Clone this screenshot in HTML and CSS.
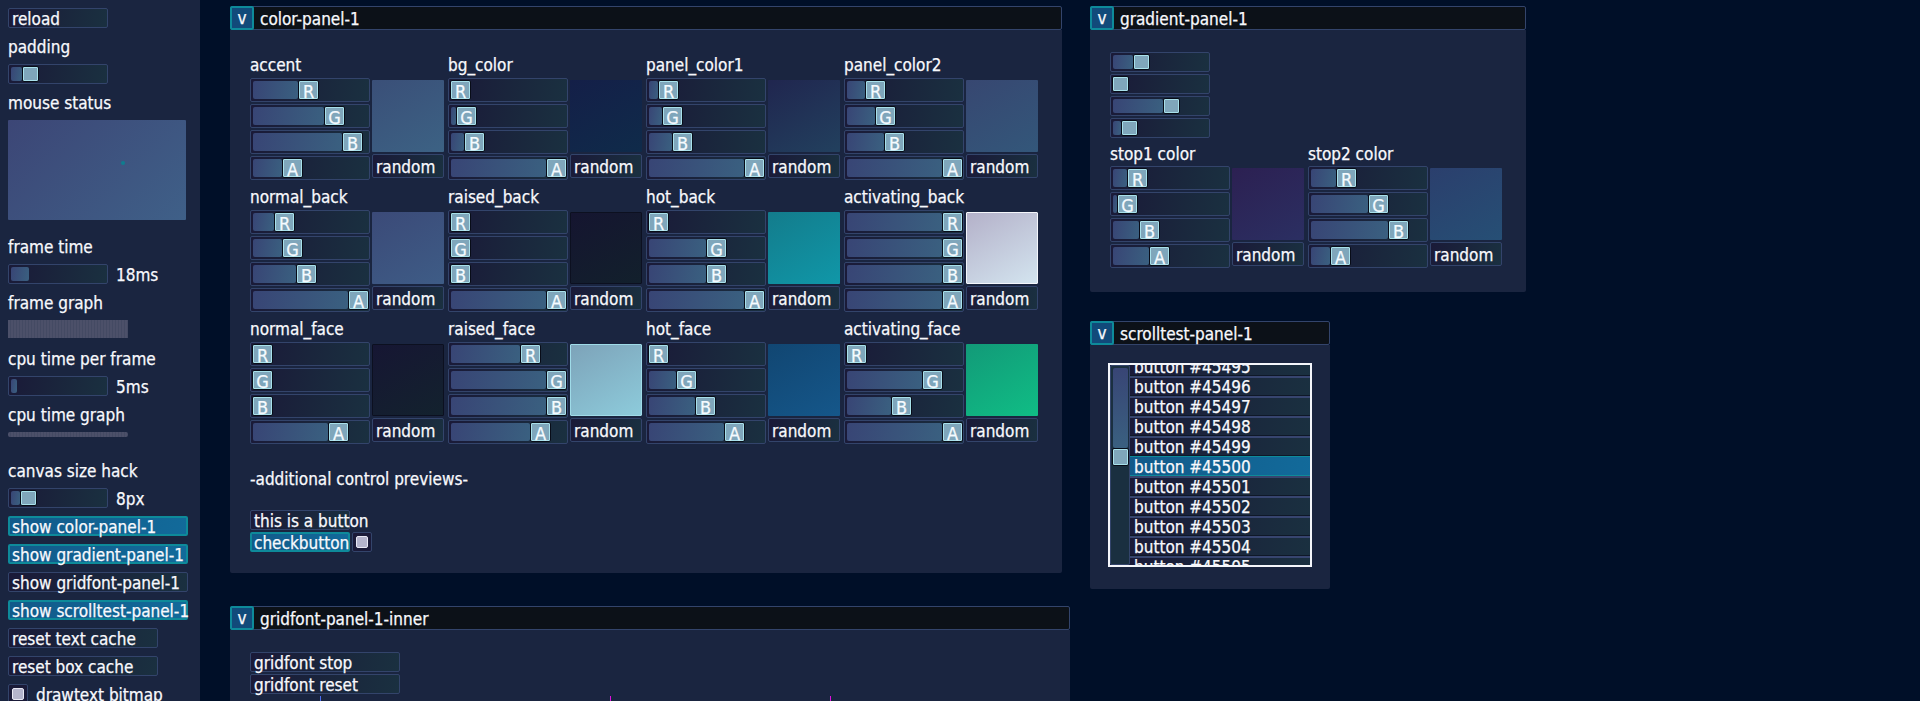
FILE: index.html
```html
<!DOCTYPE html>
<html>
<head>
    <title>gui demo</title>
    <meta charset="UTF-8">
    <link rel="stylesheet" href="styles.css">
</head>

<body>

<div class="sidebar">
    <div class="btn short">reload</div>
    <div class="label">padding</div>
    <div class="slider small short"><div class="fill" style="width:11px"></div><div class="thumb"></div></div>
    <div class="label">mouse status</div>
    <div class="mouse-box"><div class="mouse-dot"></div></div>
    <div class="label after-box">frame time</div>
    <div class="value-row">
        <div class="slider small short"><div class="fill" style="width:18px"></div></div>
        <span>18ms</span>
    </div>
    <div class="label">frame graph</div>
    <div class="graph frame-graph"></div>
    <div class="label after-graph">cpu time per frame</div>
    <div class="value-row">
        <div class="slider small short"><div class="fill" style="width:6px"></div></div>
        <span>5ms</span>
    </div>
    <div class="label">cpu time graph</div>
    <div class="graph cpu-graph"></div>
    <div class="label after-cpu">canvas size hack</div>
    <div class="value-row">
        <div class="slider small short"><div class="fill" style="width:9px"></div><div class="thumb"></div></div>
        <span>8px</span>
    </div>
    <div class="btn on wide">show color-panel-1</div>
    <div class="btn on wide">show gradient-panel-1</div>
    <div class="btn wide">show gridfont-panel-1</div>
    <div class="btn on wide">show scrolltest-panel-1</div>
    <div class="btn mid">reset text cache</div>
    <div class="btn mid">reset box cache</div>
    <div class="check-row">
        <div class="check"><div class="check-mark"></div></div>
        <span>drawtext bitmap</span>
    </div>
</div>

<div class="column col-left">
    <div class="panel color-panel">
        <div class="panel-head"><div class="toggle">v</div><span>color-panel-1</span></div>
        <div class="panel-body color-body">
            <div class="picker-grid">

                <div class="picker">
                    <div class="label">accent</div>
                    <div class="picker-main">
                        <div class="sliders">
                            <div class="slider"><div class="fill" style="width:45px"></div><div class="thumb">R</div></div>
                            <div class="slider"><div class="fill" style="width:71px"></div><div class="thumb">G</div></div>
                            <div class="slider"><div class="fill" style="width:89px"></div><div class="thumb">B</div></div>
                            <div class="slider"><div class="fill" style="width:29px"></div><div class="thumb">A</div></div>
                        </div>
                        <div class="picker-side"><div class="swatch sw-accent"></div><div class="btn random">random</div></div>
                    </div>
                </div>

                <div class="picker">
                    <div class="label">bg_color</div>
                    <div class="picker-main">
                        <div class="sliders">
                            <div class="slider"><div class="thumb">R</div></div>
                            <div class="slider"><div class="fill" style="width:5px"></div><div class="thumb">G</div></div>
                            <div class="slider"><div class="fill" style="width:13px"></div><div class="thumb">B</div></div>
                            <div class="slider"><div class="fill" style="width:95px"></div><div class="thumb">A</div></div>
                        </div>
                        <div class="picker-side"><div class="swatch sw-bg"></div><div class="btn random">random</div></div>
                    </div>
                </div>

                <div class="picker">
                    <div class="label">panel_color1</div>
                    <div class="picker-main">
                        <div class="sliders">
                            <div class="slider"><div class="fill" style="width:9px"></div><div class="thumb">R</div></div>
                            <div class="slider"><div class="fill" style="width:13px"></div><div class="thumb">G</div></div>
                            <div class="slider"><div class="fill" style="width:23px"></div><div class="thumb">B</div></div>
                            <div class="slider"><div class="fill" style="width:95px"></div><div class="thumb">A</div></div>
                        </div>
                        <div class="picker-side"><div class="swatch sw-panel1"></div><div class="btn random">random</div></div>
                    </div>
                </div>

                <div class="picker">
                    <div class="label">panel_color2</div>
                    <div class="picker-main">
                        <div class="sliders">
                            <div class="slider"><div class="fill" style="width:18px"></div><div class="thumb">R</div></div>
                            <div class="slider"><div class="fill" style="width:28px"></div><div class="thumb">G</div></div>
                            <div class="slider"><div class="fill" style="width:37px"></div><div class="thumb">B</div></div>
                            <div class="slider"><div class="fill" style="width:95px"></div><div class="thumb">A</div></div>
                        </div>
                        <div class="picker-side"><div class="swatch sw-panel2"></div><div class="btn random">random</div></div>
                    </div>
                </div>

                <div class="picker">
                    <div class="label">normal_back</div>
                    <div class="picker-main">
                        <div class="sliders">
                            <div class="slider"><div class="fill" style="width:21px"></div><div class="thumb">R</div></div>
                            <div class="slider"><div class="fill" style="width:29px"></div><div class="thumb">G</div></div>
                            <div class="slider"><div class="fill" style="width:43px"></div><div class="thumb">B</div></div>
                            <div class="slider"><div class="fill" style="width:95px"></div><div class="thumb">A</div></div>
                        </div>
                        <div class="picker-side"><div class="swatch sw-normal-back"></div><div class="btn random">random</div></div>
                    </div>
                </div>

                <div class="picker">
                    <div class="label">raised_back</div>
                    <div class="picker-main">
                        <div class="sliders">
                            <div class="slider"><div class="thumb">R</div></div>
                            <div class="slider"><div class="thumb">G</div></div>
                            <div class="slider"><div class="thumb">B</div></div>
                            <div class="slider"><div class="fill" style="width:95px"></div><div class="thumb">A</div></div>
                        </div>
                        <div class="picker-side"><div class="swatch sw-raised-back"></div><div class="btn random">random</div></div>
                    </div>
                </div>

                <div class="picker">
                    <div class="label">hot_back</div>
                    <div class="picker-main">
                        <div class="sliders">
                            <div class="slider"><div class="thumb">R</div></div>
                            <div class="slider"><div class="fill" style="width:57px"></div><div class="thumb">G</div></div>
                            <div class="slider"><div class="fill" style="width:57px"></div><div class="thumb">B</div></div>
                            <div class="slider"><div class="fill" style="width:95px"></div><div class="thumb">A</div></div>
                        </div>
                        <div class="picker-side"><div class="swatch sw-hot-back"></div><div class="btn random">random</div></div>
                    </div>
                </div>

                <div class="picker">
                    <div class="label">activating_back</div>
                    <div class="picker-main">
                        <div class="sliders">
                            <div class="slider"><div class="fill" style="width:95px"></div><div class="thumb">R</div></div>
                            <div class="slider"><div class="fill" style="width:95px"></div><div class="thumb">G</div></div>
                            <div class="slider"><div class="fill" style="width:95px"></div><div class="thumb">B</div></div>
                            <div class="slider"><div class="fill" style="width:95px"></div><div class="thumb">A</div></div>
                        </div>
                        <div class="picker-side"><div class="swatch sw-activating-back"></div><div class="btn random">random</div></div>
                    </div>
                </div>

                <div class="picker">
                    <div class="label">normal_face</div>
                    <div class="picker-main">
                        <div class="sliders">
                            <div class="slider"><div class="thumb">R</div></div>
                            <div class="slider"><div class="thumb">G</div></div>
                            <div class="slider"><div class="thumb">B</div></div>
                            <div class="slider"><div class="fill" style="width:75px"></div><div class="thumb">A</div></div>
                        </div>
                        <div class="picker-side"><div class="swatch sw-normal-face"></div><div class="btn random">random</div></div>
                    </div>
                </div>

                <div class="picker">
                    <div class="label">raised_face</div>
                    <div class="picker-main">
                        <div class="sliders">
                            <div class="slider"><div class="fill" style="width:69px"></div><div class="thumb">R</div></div>
                            <div class="slider"><div class="fill" style="width:95px"></div><div class="thumb">G</div></div>
                            <div class="slider"><div class="fill" style="width:95px"></div><div class="thumb">B</div></div>
                            <div class="slider"><div class="fill" style="width:79px"></div><div class="thumb">A</div></div>
                        </div>
                        <div class="picker-side"><div class="swatch sw-raised-face"></div><div class="btn random">random</div></div>
                    </div>
                </div>

                <div class="picker">
                    <div class="label">hot_face</div>
                    <div class="picker-main">
                        <div class="sliders">
                            <div class="slider"><div class="thumb">R</div></div>
                            <div class="slider"><div class="fill" style="width:27px"></div><div class="thumb">G</div></div>
                            <div class="slider"><div class="fill" style="width:46px"></div><div class="thumb">B</div></div>
                            <div class="slider"><div class="fill" style="width:75px"></div><div class="thumb">A</div></div>
                        </div>
                        <div class="picker-side"><div class="swatch sw-hot-face"></div><div class="btn random">random</div></div>
                    </div>
                </div>

                <div class="picker">
                    <div class="label">activating_face</div>
                    <div class="picker-main">
                        <div class="sliders">
                            <div class="slider"><div class="thumb">R</div></div>
                            <div class="slider"><div class="fill" style="width:75px"></div><div class="thumb">G</div></div>
                            <div class="slider"><div class="fill" style="width:44px"></div><div class="thumb">B</div></div>
                            <div class="slider"><div class="fill" style="width:95px"></div><div class="thumb">A</div></div>
                        </div>
                        <div class="picker-side"><div class="swatch sw-activating-face"></div><div class="btn random">random</div></div>
                    </div>
                </div>

            </div>

            <div class="label previews-title">-additional control previews-</div>
            <div class="previews">
                <div class="btn preview-btn">this is a button</div>
                <div class="check-row">
                    <div class="btn on preview-btn">checkbutton</div>
                    <div class="check"><div class="check-mark"></div></div>
                </div>
            </div>
        </div>
    </div>

    <div class="panel gridfont-panel">
        <div class="panel-head"><div class="toggle">v</div><span>gridfont-panel-1-inner</span></div>
        <div class="panel-body gridfont-body">
            <div class="btn gridfont-btn">gridfont stop</div>
            <div class="btn gridfont-btn">gridfont reset</div>
            <div class="gridfont-canvas">
                <div class="tick tick-a"></div>
                <div class="tick tick-b"></div>
                <div class="tick tick-c"></div>
            </div>
        </div>
    </div>
</div>

<div class="column col-right">
    <div class="panel gradient-panel">
        <div class="panel-head"><div class="toggle">v</div><span>gradient-panel-1</span></div>
        <div class="panel-body gradient-body">
            <div class="stop-sliders">
                <div class="slider small short"><div class="fill" style="width:20px"></div><div class="thumb"></div></div>
                <div class="slider small short"><div class="thumb"></div></div>
                <div class="slider small short"><div class="fill" style="width:50px"></div><div class="thumb"></div></div>
                <div class="slider small short"><div class="fill" style="width:8px"></div><div class="thumb"></div></div>
            </div>
            <div class="picker-row">
                <div class="picker">
                    <div class="label">stop1 color</div>
                    <div class="picker-main">
                        <div class="sliders">
                            <div class="slider"><div class="fill" style="width:14px"></div><div class="thumb">R</div></div>
                            <div class="slider"><div class="fill" style="width:4px"></div><div class="thumb">G</div></div>
                            <div class="slider"><div class="fill" style="width:26px"></div><div class="thumb">B</div></div>
                            <div class="slider"><div class="fill" style="width:36px"></div><div class="thumb">A</div></div>
                        </div>
                        <div class="picker-side"><div class="swatch sw-stop1"></div><div class="btn random">random</div></div>
                    </div>
                </div>
                <div class="picker">
                    <div class="label">stop2 color</div>
                    <div class="picker-main">
                        <div class="sliders">
                            <div class="slider"><div class="fill" style="width:25px"></div><div class="thumb">R</div></div>
                            <div class="slider"><div class="fill" style="width:57px"></div><div class="thumb">G</div></div>
                            <div class="slider"><div class="fill" style="width:77px"></div><div class="thumb">B</div></div>
                            <div class="slider"><div class="fill" style="width:19px"></div><div class="thumb">A</div></div>
                        </div>
                        <div class="picker-side"><div class="swatch sw-stop2"></div><div class="btn random">random</div></div>
                    </div>
                </div>
            </div>
        </div>
    </div>

    <div class="panel scroll-panel">
        <div class="panel-head"><div class="toggle">v</div><span>scrolltest-panel-1</span></div>
        <div class="panel-body scroll-body">
            <div class="scroll-box">
                <div class="scrollbar">
                    <div class="scroll-fill"></div>
                    <div class="thumb"></div>
                </div>
                <div class="scroll-list">
                    <div class="scroll-item">button #45495</div>
                    <div class="scroll-item">button #45496</div>
                    <div class="scroll-item">button #45497</div>
                    <div class="scroll-item">button #45498</div>
                    <div class="scroll-item">button #45499</div>
                    <div class="scroll-item on">button #45500</div>
                    <div class="scroll-item">button #45501</div>
                    <div class="scroll-item">button #45502</div>
                    <div class="scroll-item">button #45503</div>
                    <div class="scroll-item">button #45504</div>
                    <div class="scroll-item">button #45505</div>
                </div>
            </div>
        </div>
    </div>
</div>

</body>
</html>
```

FILE: styles.css
```css
body {
    margin: 0;
    height: 701px;
    overflow: hidden;
    display: flex;
    background-color: #000f28;
    color: #f8f9fd;
    font-family: "DejaVu Sans", sans-serif;
    font-stretch: condensed;
    font-size: 17px;
    line-height: 20px;
    white-space: nowrap;
    -webkit-text-stroke: 0.25px #f8f9fd;
}

/* sidebar */
.sidebar {
    width: 200px;
    height: 701px;
    box-sizing: border-box;
    padding: 8px;
    flex-shrink: 0;
    display: flex;
    flex-direction: column;
    gap: 8px;
    background-color: #1a2540;
}

.sidebar > * {
    flex-shrink: 0;
}

.label {
    height: 20px;
}

.sidebar .label,
.gradient-body .label,
.value-row span,
.check-row span {
    line-height: 22px;
}

.after-box {
    margin-top: 8px;
}

.after-graph {
    margin-top: 2px;
}

.after-cpu {
    margin-top: 15px;
}

.mouse-box {
    position: relative;
    width: 178px;
    height: 100px;
    background: linear-gradient(135deg, #3c4676, #3f6088);
    border-radius: 1px;
}

.mouse-dot {
    position: absolute;
    left: 113px;
    top: 41px;
    width: 4px;
    height: 4px;
    border-radius: 50%;
    background-color: #0f7d8f;
}

.graph {
    width: 120px;
    background: repeating-linear-gradient(90deg, #4c5069 0, #4c5069 2px, #444a63 2px, #444a63 3px);
}

.frame-graph {
    height: 18px;
}

.cpu-graph {
    height: 5px;
    border-radius: 2px;
}

.value-row,
.check-row {
    display: flex;
    align-items: flex-start;
    gap: 8px;
    height: 20px;
}

/* buttons */
.btn {
    box-sizing: border-box;
    height: 20px;
    flex-shrink: 0;
    padding-left: 3px;
    border: 1px solid #33446b;
    border-radius: 2px;
    background: linear-gradient(100deg, #1a1a38, #1a3040);
    line-height: 21px;
}

.btn.on {
    padding-left: 2px;
    border: 2px solid #0e8a9a;
    background: linear-gradient(100deg, #125a8a, #126a9a);
    line-height: 19px;
}

.btn.short,
.slider.short {
    width: 100px;
}

.btn.wide {
    width: 180px;
}

.btn.mid {
    width: 150px;
}

.check {
    box-sizing: border-box;
    width: 20px;
    height: 20px;
    padding: 3px;
    border: 1px solid #33446b;
    border-radius: 2px;
    background-color: #1a1a38;
}

.check-mark {
    box-sizing: border-box;
    width: 12px;
    height: 12px;
    border: 1px solid #e8e8f4;
    border-radius: 2px;
    background-color: #b4b4cc;
}

/* sliders */
.slider {
    box-sizing: border-box;
    width: 120px;
    height: 24px;
    padding: 1px 0 1px 2px;
    display: flex;
    align-items: center;
    flex-shrink: 0;
    border: 1px solid #33446b;
    border-radius: 2px;
    background: linear-gradient(100deg, #1a1a38, #1a3040);
}

.slider.small {
    height: 20px;
}

.fill {
    height: 18px;
    flex-shrink: 0;
    border-radius: 2px;
    background: linear-gradient(100deg, #384575, #3a6080);
}

.slider.small .fill {
    height: 14px;
}

.thumb {
    box-sizing: border-box;
    width: 21px;
    height: 20px;
    flex-shrink: 0;
    border: 1px solid #080c18;
    border-radius: 2px;
    background-color: #7fa6bb;
    box-shadow: inset 0 0 0 1px #a8e0ea;
    text-align: center;
    font-size: 18px;
    line-height: 21px;
    color: #f4fbff;
}

.thumb:first-child {
    margin-left: -1px;
}

.slider.small .thumb {
    width: 17px;
    height: 16px;
}

/* panels */
.column {
    display: flex;
    flex-direction: column;
    padding-top: 6px;
    flex-shrink: 0;
}

.col-left {
    width: 840px;
    margin-left: 30px;
    gap: 33px;
}

.col-right {
    margin-left: 20px;
    gap: 29px;
}

.panel-head {
    box-sizing: border-box;
    height: 24px;
    display: flex;
    align-items: center;
    gap: 6px;
    border: 1px solid #33446b;
    border-radius: 2px;
    background-color: #0c1118;
}

.panel-head span {
    margin-top: 2px;
}

.toggle {
    box-sizing: border-box;
    width: 24px;
    height: 24px;
    margin: -1px 0 -1px -1px;
    border: 2px solid #0e8a9a;
    border-radius: 2px;
    background-color: #114a7a;
    text-align: center;
    line-height: 20px;
}

.panel-body {
    background-color: #1a2540;
    border-radius: 0 0 2px 2px;
    padding-left: 20px;
}

.color-panel {
    width: 832px;
}

.color-body {
    padding-top: 25px;
    padding-bottom: 21px;
}

.picker-grid {
    display: grid;
    grid-template-columns: repeat(4, 194px);
    column-gap: 4px;
    row-gap: 7px;
}

.picker {
    width: 194px;
}

.picker-main {
    display: flex;
    gap: 2px;
    margin-top: 3px;
}

.sliders {
    display: flex;
    flex-direction: column;
    gap: 2px;
}

.picker-side {
    display: flex;
    flex-direction: column;
    gap: 2px;
    padding-top: 2px;
}

.swatch {
    box-sizing: border-box;
    width: 72px;
    height: 72px;
    border-radius: 1px;
}

.btn.random {
    width: 72px;
    height: 24px;
    line-height: 25px;
}

.sw-accent { background: linear-gradient(150deg, #3a4f78, #3c6284); }
.sw-bg { background: linear-gradient(150deg, #141f48, #0f2b4a); }
.sw-panel1 { background: linear-gradient(150deg, #20264f, #22405e); }
.sw-panel2 { background: linear-gradient(150deg, #374771, #33577a); }
.sw-normal-back { background: linear-gradient(150deg, #3b4a78, #3e5c86); }
.sw-raised-back { background: linear-gradient(150deg, #151530, #12202c); border: 1px solid #0c1020; }
.sw-hot-back { background: linear-gradient(150deg, #137c8c, #1097a8); }
.sw-activating-back { background: linear-gradient(150deg, #b4b1c9, #d3e4ef); border: 1px solid #f4f6fb; }
.sw-normal-face { background: linear-gradient(150deg, #161633, #13222e); border: 1px solid #0c1020; }
.sw-raised-face { background: linear-gradient(150deg, #7da3b9, #8dcbdb); border: 1px solid #9fdbe8; }
.sw-hot-face { background: linear-gradient(150deg, #114672, #15578a); }
.sw-activating-face { background: linear-gradient(150deg, #129a78, #10bd85); }
.sw-stop1 { background: linear-gradient(150deg, #2c2052, #2b2f62); }
.sw-stop2 { background: linear-gradient(150deg, #2b3f6d, #264f75); }

.previews-title {
    margin-top: 25px;
}

.previews {
    margin-top: 21px;
    display: flex;
    flex-direction: column;
    gap: 2px;
}

.btn.preview-btn {
    width: 100px;
}

.previews .check-row {
    gap: 2px;
}

/* gridfont */
.gridfont-panel {
    width: 840px;
}

.gridfont-body {
    height: 100px;
    padding-top: 22px;
    display: flex;
    flex-direction: column;
    gap: 2px;
}

.btn.gridfont-btn {
    width: 150px;
}

.gridfont-canvas {
    position: relative;
    height: 20px;
}

.tick {
    position: absolute;
    top: 0;
    width: 1px;
    height: 20px;
}

.tick-a {
    left: 70px;
    background-color: #4a6cf0;
}

.tick-b {
    left: 360px;
    background-color: #e010e0;
}

.tick-c {
    left: 580px;
    background-color: #e010e0;
}

/* gradient */
.gradient-panel {
    width: 436px;
}

.gradient-body {
    padding-top: 22px;
    padding-bottom: 24px;
}

.stop-sliders {
    display: flex;
    flex-direction: column;
    gap: 2px;
}

.picker-row {
    display: flex;
    gap: 4px;
    margin-top: 5px;
}

/* scroll test */
.scroll-panel {
    width: 240px;
}

.scroll-body {
    padding-top: 20px;
    padding-bottom: 24px;
}

.scroll-box {
    width: 200px;
    height: 200px;
    display: flex;
    overflow: hidden;
    outline: 2px solid #f4f6fb;
}

.scrollbar {
    box-sizing: border-box;
    width: 20px;
    height: 200px;
    padding: 2px 1px;
    flex-shrink: 0;
    display: flex;
    flex-direction: column;
    align-items: center;
    border: 1px solid #33446b;
    border-radius: 2px;
    background-color: #1a2f40;
}

.scroll-fill {
    width: 15px;
    height: 80px;
    flex-shrink: 0;
    border-radius: 2px;
    background: linear-gradient(180deg, #384575, #3a6080);
}

.scrollbar .thumb {
    width: 17px;
    height: 18px;
}

.scroll-list {
    flex: 1;
    margin-top: -9px;
}

.scroll-item {
    box-sizing: border-box;
    height: 20px;
    padding-left: 4px;
    border-top: 2px solid #37456f;
    border-bottom: 1px solid #0f1828;
    background: linear-gradient(100deg, #1a1a38, #1a3040);
    line-height: 19px;
}

.scroll-item.on {
    border-top: 1px solid #0e8a9a;
    border-bottom: 1px solid #0e8a9a;
    background: linear-gradient(100deg, #125a8a, #126a9a);
    line-height: 20px;
}
```
